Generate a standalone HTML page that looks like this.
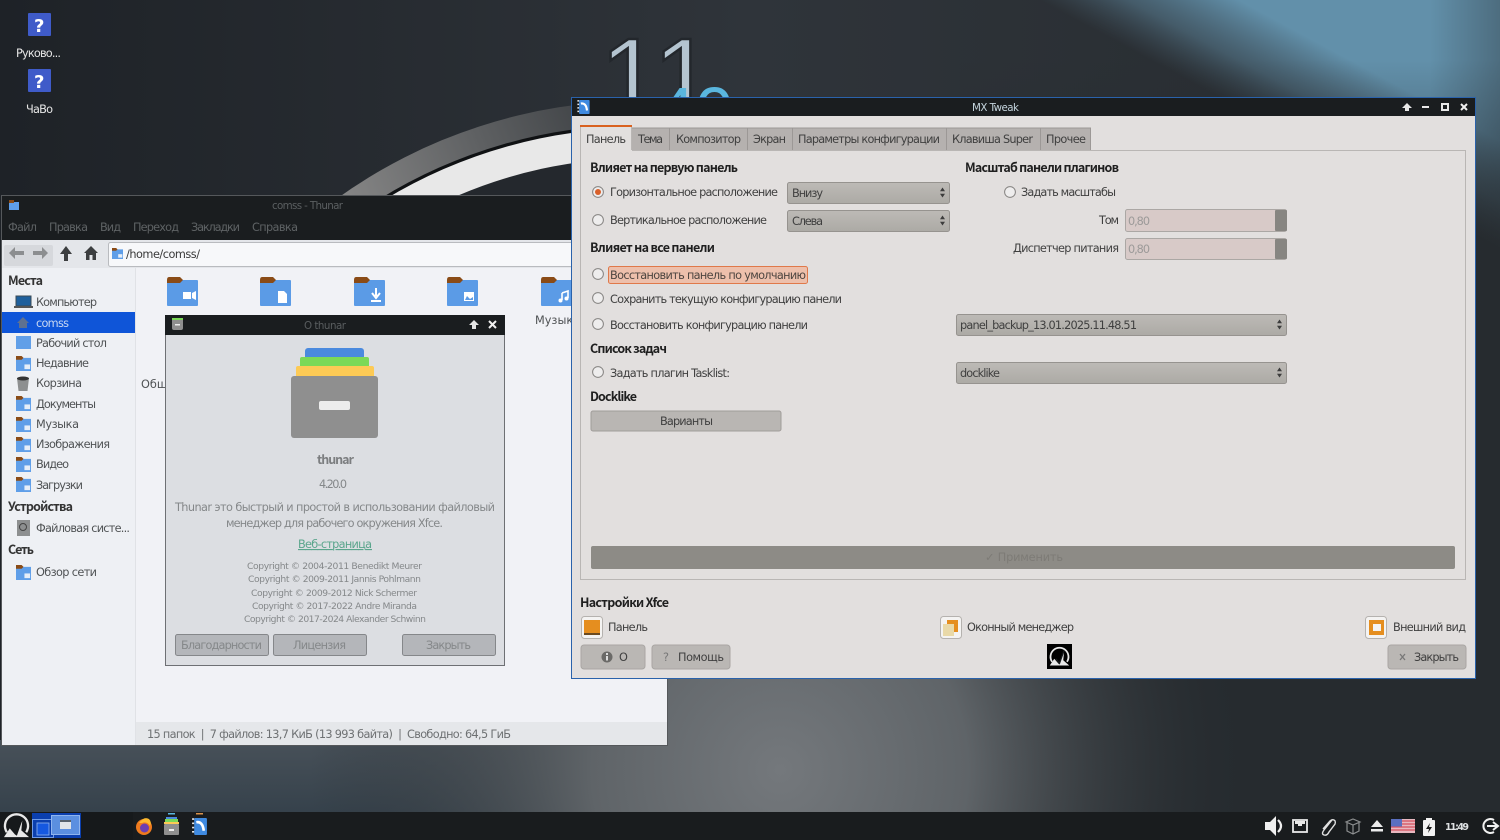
<!DOCTYPE html>
<html lang="ru"><head><meta charset="utf-8"><title>MX Tweak</title>
<style>
html,body{margin:0;padding:0;background:#1f2328;width:1500px;height:840px;overflow:hidden}
svg{display:block;overflow:hidden;filter:blur(.35px)}
text{font-family:"DejaVu Sans","Noto Sans CJK JP",sans-serif;font-size:11.3px;fill:#3f3f3f;white-space:pre}
.b{font-family:"Noto Sans CJK JP","DejaVu Sans",sans-serif;font-size:12.5px;font-weight:700;fill:#1f1f1f}
.s{fill:#4f5254}
.d{fill:#85888a}
.c{font-size:9.2px;fill:#85888a}
.t{font-size:10.3px}
</style></head><body>
<svg xmlns="http://www.w3.org/2000/svg" width="1500" height="840" viewBox="0 0 1500 840">
<defs>
<linearGradient id="bl" gradientUnits="userSpaceOnUse" x1="1095" y1="30" x2="1185" y2="-137"><stop offset="0" stop-color="#4a6272" stop-opacity="0"/><stop offset=".22" stop-color="#56788c" stop-opacity=".6"/><stop offset=".5" stop-color="#6290aa"/><stop offset="1" stop-color="#6290aa"/></linearGradient>
<linearGradient id="dk" x1="0" y1="0" x2="0" y2="1"><stop offset="0" stop-color="#262b2f" stop-opacity="0"/><stop offset=".25" stop-color="#262b2f" stop-opacity=".45"/><stop offset=".8" stop-color="#262b2f"/></linearGradient>
<linearGradient id="rt" x1="0" y1="0" x2="1" y2="0"><stop offset="0" stop-color="#262b2f" stop-opacity="0"/><stop offset="1" stop-color="#262b2f" stop-opacity=".35"/></linearGradient>
<radialGradient id="gr" gradientUnits="userSpaceOnUse" cx="780" cy="770" r="470"><stop offset="0" stop-color="#74787c"/><stop offset=".4" stop-color="#5f6468"/><stop offset="1" stop-color="#282d31" stop-opacity="0"/></radialGradient>
<linearGradient id="bot" x1="0" y1="0" x2="0" y2="1"><stop offset="0" stop-color="#485159"/><stop offset="1" stop-color="#35414b"/></linearGradient>
<linearGradient id="bg" x1="0" y1="0" x2="1" y2="0"><stop offset="0" stop-color="#1e2227"/><stop offset=".5" stop-color="#2f343a"/><stop offset="1" stop-color="#262b2f"/></linearGradient>
<linearGradient id="ring" gradientUnits="userSpaceOnUse" x1="345" y1="195" x2="570" y2="105"><stop offset="0" stop-color="#858585"/><stop offset=".6" stop-color="#5e6062"/><stop offset="1" stop-color="#45484b"/></linearGradient>
<linearGradient id="cb" x1="0" y1="0" x2="0" y2="1"><stop offset="0" stop-color="#bdbab6"/><stop offset="1" stop-color="#acaaa5"/></linearGradient>
<symbol id="fb" viewBox="0 0 31 29"><rect y="3" width="31" height="26" rx="1" fill="#5b9be6"/><path d="M0 3Q0 0 2 0H13L16 3 13 6H0Z" fill="#8a4b16"/></symbol>
<symbol id="fs" viewBox="0 0 16 16"><rect y="2" width="16" height="14" fill="#5f9ee8"/><path d="M0 2V0H6L8 2 6 4H0Z" fill="#8a4b16"/><rect x="9" y="9" width="6" height="5" fill="#e6eef8"/></symbol>
<symbol id="mx" viewBox="0 0 28 28"><path d="M4 21A12 12 0 1 1 24 21" fill="none" stroke="#e8e8e8" stroke-width="2.400"/><path d="M1 26 7 17 13 24 20 9 19 19 27 26Z" fill="#e8e8e8"/><path d="M9 17 14 23 20 6" fill="none" stroke="#15181a" stroke-width="1.800"/></symbol>
<symbol id="tw" viewBox="0 0 14 16"><rect x="2" y="0" width="12" height="16" rx="1" fill="#3f8ae0"/><path d="M4 4Q10 3 11 12" fill="none" stroke="#fff" stroke-width="2.500"/><path d="M0 1H2M0 5H2M0 9H2M0 13H2" stroke="#e8e8e8" stroke-width="1.600"/></symbol>
<symbol id="th" viewBox="0 0 87 90"><rect x="14" width="59" height="16" rx="3" fill="#4a8ade"/><rect x="9" y="9" width="69" height="16" rx="2" fill="#7bd957"/><rect x="5" y="18" width="78" height="16" rx="2" fill="#fdca55"/><rect y="28" width="87" height="62" rx="3" fill="#8f8f8f"/><rect x="28" y="53" width="31" height="9" rx="2" fill="#ececec"/></symbol>
<symbol id="rd" viewBox="0 0 12 12"><circle cx="6" cy="6" r="5.400" fill="#eeeded" stroke="#858381" stroke-width="1"/></symbol>
<symbol id="sp" viewBox="0 0 6 12"><path d="M3 0 6 4.500H0ZM3 12 0 7.500H6Z" fill="#3c3c3c"/></symbol>
</defs>

<!-- wallpaper -->
<rect width="1500" height="840" fill="url(#bg)"/>
<rect x="0" y="740" width="700" height="75" fill="url(#bot)"/>
<rect x="960" width="540" height="600" fill="url(#bl)"/>
<rect x="960" y="60" width="540" height="500" fill="url(#dk)"/>
<rect x="1430" y="0" width="70" height="300" fill="url(#rt)"/>
<rect x="960" y="560" width="540" height="260" fill="#262b2f"/>
<rect x="300" y="300" width="1000" height="515" fill="url(#gr)"/>
<path d="M335 200A519 519 0 0 1 945 200Z" fill="url(#ring)"/>
<path d="M378 200A495 495 0 0 1 902 200Z" fill="#101214"/>
<path d="M384 200A492 492 0 0 1 896 200Z" fill="#e8e8e8"/>
<path d="M448 200A462 462 0 0 1 832 200Z" fill="#24282d"/>
<text x="600" y="115" stroke="#23272c" stroke-width="2.500" style="font-family:'Liberation Sans',sans-serif;font-size:110px;fill:#b4c4d0">11</text>
<text x="656" y="136" style="font-family:'Liberation Sans',sans-serif;font-size:70px;fill:#5ab6de">40</text>

<!-- desktop icons -->
<rect x="28" y="13" width="23" height="23" rx="1" fill="#3f5bc9"/><text x="34" y="32" style="font-size:18px;font-weight:700;fill:#fff">?</text>
<rect x="28" y="69" width="23" height="23" rx="1" fill="#3f5bc9"/><text x="34" y="88" style="font-size:18px;font-weight:700;fill:#fff">?</text>
<text x="16" y="57" textLength="45" style="fill:#e6e6e6">Руково...</text>
<text x="26" y="113" textLength="27" style="fill:#e6e6e6">ЧаВо</text>

<!-- Thunar window -->
<rect x="1.500" y="195.500" width="666" height="550" fill="#f1f2f6" stroke="#55585b"/>
<rect x="2" y="196" width="665" height="44" fill="#1a1d1f"/>
<g transform="translate(9 200)"><rect y="2" width="10" height="8" fill="#5f9ee8"/><rect width="5" height="3" fill="#8a4b16"/></g>
<text x="272" y="209" textLength="71" class="t" style="fill:#5b5f61">comss - Thunar</text>
<text x="8" y="231" textLength="29" style="fill:#5e6264">Файл</text>
<text x="49" y="231" textLength="39" style="fill:#5e6264">Правка</text>
<text x="100" y="231" textLength="21" style="fill:#5e6264">Вид</text>
<text x="133" y="231" textLength="46" style="fill:#5e6264">Переход</text>
<text x="191" y="231" textLength="49" style="fill:#5e6264">Закладки</text>
<text x="252" y="231" textLength="46" style="fill:#5e6264">Справка</text>
<rect x="2" y="240" width="665" height="28" fill="#e4e6ea"/>
<rect x="4" y="245" width="49" height="21" rx="2" fill="#d6d8dc"/>
<path d="M9 253 15 247V251H24V255H15V259Z" fill="#8c8e90"/>
<path d="M48 253 42 247V251H33V255H42V259Z" fill="#8c8e90"/>
<path d="M66 246 72 254H68V261H64V254H60Z" fill="#3c3e40"/>
<path d="M91 246 98 253H96V260H92.500V255H89.500V260H86V253H84Z" fill="#3c3e40"/>
<rect x="108.500" y="242.500" width="480" height="24" rx="2" fill="#f7f8fa" stroke="#b9bbbf"/>
<use href="#fs" x="112" y="248" width="11" height="11"/>
<text x="126" y="258" textLength="74" style="fill:#3a3a3a">/home/comss/</text>

<!-- sidebar -->
<rect x="2" y="268" width="134" height="477" fill="#eef0f4"/>
<rect x="135" y="268" width="1" height="477" fill="#e0e2e6"/>
<text x="8" y="285" textLength="35" class="b" style="fill:#333">Места</text>
<rect x="16" y="296" width="15" height="10" fill="#1e5f9c" stroke="#3a4a55"/><rect x="14" y="306" width="19" height="2" fill="#555"/>
<text x="36" y="306" textLength="61" class="s">Компьютер</text>
<rect x="2" y="312" width="133" height="21" fill="#0f55d8"/>
<path d="M23 317 29 323H27V328H19V323H17Z" fill="#5f7190"/>
<text x="36" y="327" textLength="33" style="fill:#c9d8f2">comss</text>
<rect x="16" y="336" width="15" height="13" fill="#619fe8"/>
<text x="36" y="347" textLength="71" class="s">Рабочий стол</text>
<use href="#fs" x="16" y="356" width="15" height="15"/>
<text x="36" y="367" textLength="53" class="s">Недавние</text>
<path d="M17 378H29L27.500 391H18.500Z" fill="#8d8f90"/><ellipse cx="23" cy="378.500" rx="6" ry="2" fill="#333"/>
<text x="36" y="387" textLength="46" class="s">Корзина</text>
<use href="#fs" x="16" y="396" width="15" height="15"/>
<text x="36" y="408" textLength="60" class="s">Документы</text>
<use href="#fs" x="16" y="417" width="15" height="15"/>
<text x="36" y="428" textLength="43" class="s">Музыка</text>
<use href="#fs" x="16" y="437" width="15" height="15"/>
<text x="36" y="448" textLength="74" class="s">Изображения</text>
<use href="#fs" x="16" y="457" width="15" height="15"/>
<text x="36" y="468" textLength="33" class="s">Видео</text>
<use href="#fs" x="16" y="477" width="15" height="15"/>
<text x="36" y="489" textLength="47" class="s">Загрузки</text>
<text x="8" y="511" textLength="65" class="b" style="fill:#333">Устройства</text>
<rect x="17" y="520" width="13" height="16" fill="#8d8f90"/><circle cx="23" cy="527" r="3.500" fill="none" stroke="#444"/>
<text x="36" y="532" textLength="94" class="s">Файловая систе...</text>
<text x="8" y="554" textLength="26" class="b" style="fill:#333">Сеть</text>
<use href="#fs" x="16" y="565" width="15" height="15"/>
<text x="36" y="576" textLength="61" class="s">Обзор сети</text>

<!-- folders -->
<use href="#fb" x="167" y="277" width="31" height="29"/><path d="M183 292H191V299H183ZM192 293 196 291V300L192 298Z" fill="#fff"/>
<use href="#fb" x="260" y="277" width="31" height="29"/><path d="M278 291H284L287 294V303H278Z" fill="#fff"/>
<use href="#fb" x="354" y="277" width="31" height="29"/><path d="M376 288V296M372 293 376 298 380 293M371 301H381" stroke="#fff" stroke-width="2" fill="none"/>
<use href="#fb" x="447" y="277" width="31" height="29"/><rect x="464" y="292" width="10" height="9" fill="#fff"/><path d="M465 300 467 296 470 299 473 297V300Z" fill="#5b9be6"/>
<use href="#fb" x="541" y="277" width="31" height="29"/><path d="M562 293V300M562 293 568 291V298" stroke="#fff" stroke-width="1.600" fill="none"/><circle cx="560.500" cy="300.500" r="2" fill="#fff"/><circle cx="566.500" cy="298.500" r="2" fill="#fff"/>
<text x="535" y="324" class="s">Музыка</text>
<text x="141" y="388" class="s">Общедоступные</text>

<!-- status -->
<rect x="136" y="722" width="531" height="23" fill="#e5e7ea"/>
<text x="147" y="738" textLength="364" style="fill:#6e7173">15 папок  |  7 файлов: 13,7 КиБ (13 993 байта)  |  Свободно: 64,5 ГиБ</text>

<!-- About dialog -->
<rect x="165.500" y="315.500" width="339" height="350" fill="#dcdee2" stroke="#6e7074"/>
<rect x="165" y="315" width="340" height="20" fill="#1a1d1f"/>
<rect x="172" y="318" width="11" height="12" rx="2" fill="#8f8f8f"/><rect x="172" y="318" width="11" height="2" fill="#7bd957"/><rect x="175" y="324" width="5" height="1.500" fill="#eee"/>
<text x="304" y="329" textLength="42" class="t" style="fill:#595d5f">O thunar</text>
<path d="M474 320 479 325H476V329H472V325H469Z" fill="#e4e4e4"/>
<path d="M489 321 496 328M496 321 489 328" stroke="#f0f0f0" stroke-width="2"/>
<use href="#th" x="291" y="348" width="87" height="90"/>
<text x="317" y="464" textLength="37" class="b" style="fill:#7c7e80">thunar</text>
<text x="319" y="488" textLength="28" class="d">4.20.0</text>
<text x="175" y="511" textLength="320" class="d">Thunar это быстрый и простой в использовании файловый</text>
<text x="226" y="527" textLength="217" class="d">менеджер для рабочего окружения Xfce.</text>
<text x="298" y="548" textLength="74" style="fill:#5aa58c;text-decoration:underline">Веб-страница</text>
<text x="247" y="569" textLength="175" class="c">Copyright © 2004-2011 Benedikt Meurer</text>
<text x="248" y="582" textLength="173" class="c">Copyright © 2009-2011 Jannis Pohlmann</text>
<text x="251" y="596" textLength="166" class="c">Copyright © 2009-2012 Nick Schermer</text>
<text x="252" y="609" textLength="165" class="c">Copyright © 2017-2022 Andre Miranda</text>
<text x="244" y="622" textLength="182" class="c">Copyright © 2017-2024 Alexander Schwinn</text>
<rect x="175.500" y="634.500" width="93" height="21" rx="2" fill="#b4b6ba" stroke="#85878a"/>
<rect x="273.500" y="634.500" width="93" height="21" rx="2" fill="#b4b6ba" stroke="#85878a"/>
<rect x="402.500" y="634.500" width="93" height="21" rx="2" fill="#b4b6ba" stroke="#85878a"/>
<text x="181" y="649" textLength="81" class="d">Благодарности</text>
<text x="293" y="649" textLength="53" class="d">Лицензия</text>
<text x="426" y="649" textLength="45" class="d">Закрыть</text>

<!-- MX Tweak -->
<rect x="571.500" y="97.500" width="904" height="581" fill="#e2dfde" stroke="#2a62ab"/>
<rect x="572" y="98" width="903" height="18" fill="#1a1d1f"/>
<use href="#tw" x="577" y="100" width="13" height="14"/>
<text x="972" y="111" textLength="47" class="t" style="fill:#c3d3dc">MX Tweak</text>
<path d="M1407 103 1412 108H1409V111H1405V108H1402Z" fill="#e8e8e8"/>
<rect x="1422" y="106" width="7" height="2" fill="#e8e8e8"/>
<rect x="1442" y="104" width="6" height="6" fill="none" stroke="#e8e8e8" stroke-width="2"/>
<path d="M1461 104 1467 110M1467 104 1461 110" stroke="#f0f0f0" stroke-width="2"/>

<rect x="580.500" y="150.500" width="885" height="429" fill="#e2dfde" stroke="#b9b6b4"/>
<rect x="632" y="128" width="459" height="22" fill="#b5b1af"/>
<path d="M669.500 128V150M747.500 128V150M792.500 128V150M946.500 128V150M1040.500 128V150M1090.500 128V150M632 128H1091" stroke="#9c9896" fill="none"/>
<rect x="580" y="125" width="52" height="26" fill="#e2dfde"/><rect x="580" y="125" width="52" height="2" fill="#d9611f"/>
<path d="M580.500 127V151M631.500 127V150" stroke="#b9b6b4" fill="none"/>
<text x="586" y="143" textLength="40">Панель</text>
<text x="638" y="143" textLength="25">Тема</text>
<text x="676" y="143" textLength="65">Композитор</text>
<text x="753" y="143" textLength="33">Экран</text>
<text x="798" y="143" textLength="142">Параметры конфигурации</text>
<text x="952" y="143" textLength="81">Клавиша Super</text>
<text x="1046" y="143" textLength="40">Прочее</text>

<text x="590" y="172" textLength="148" class="b">Влияет на первую панель</text>
<text x="965" y="172" textLength="154" class="b">Масштаб панели плагинов</text>
<use href="#rd" x="592" y="186" width="12" height="12"/><circle cx="598" cy="192" r="3" fill="#d9602a"/>
<text x="610" y="196" textLength="168">Горизонтальное расположение</text>
<rect x="787.500" y="182.500" width="162" height="21" rx="2" fill="url(#cb)" stroke="#96938f"/>
<text x="792" y="197" textLength="31">Внизу</text><use href="#sp" x="940" y="187" width="5" height="11"/>
<use href="#rd" x="592" y="214" width="12" height="12"/>
<text x="610" y="224" textLength="157">Вертикальное расположение</text>
<rect x="787.500" y="210.500" width="162" height="21" rx="2" fill="url(#cb)" stroke="#96938f"/>
<text x="792" y="225" textLength="31">Слева</text><use href="#sp" x="940" y="215" width="5" height="11"/>

<use href="#rd" x="1004" y="186" width="12" height="12"/>
<text x="1021" y="196" textLength="95">Задать масштабы</text>
<text x="1099" y="224" textLength="20">Том</text>
<rect x="1125.500" y="209.500" width="161" height="22" rx="2" fill="#d8cac8" stroke="#aba7a4"/>
<rect x="1275" y="210" width="12" height="21" rx="1" fill="#878581"/>
<text x="1128" y="225" textLength="22" style="fill:#9c9a99">0,80</text>
<text x="1013" y="252" textLength="106">Диспетчер питания</text>
<rect x="1125.500" y="238.500" width="161" height="21" rx="2" fill="#d8cac8" stroke="#aba7a4"/>
<rect x="1275" y="239" width="12" height="20" rx="1" fill="#878581"/>
<text x="1128" y="253" textLength="22" style="fill:#9c9a99">0,80</text>

<text x="590" y="252" textLength="125" class="b">Влияет на все панели</text>
<use href="#rd" x="592" y="268" width="12" height="12"/>
<rect x="608.500" y="266.500" width="199" height="17" rx="2" fill="#edc0ac" stroke="#e0794a"/>
<text x="610" y="279" textLength="196" style="fill:#4d4540">Восстановить панель по умолчанию</text>
<use href="#rd" x="592" y="292" width="12" height="12"/>
<text x="610" y="303" textLength="232">Сохранить текущую конфигурацию панели</text>
<use href="#rd" x="592" y="318" width="12" height="12"/>
<text x="610" y="329" textLength="198">Восстановить конфигурацию панели</text>
<rect x="956.500" y="314.500" width="330" height="21" rx="2" fill="url(#cb)" stroke="#96938f"/>
<text x="960" y="329" textLength="177">panel_backup_13.01.2025.11.48.51</text><use href="#sp" x="1277" y="319" width="5" height="11"/>
<text x="590" y="353" textLength="77" class="b">Список задач</text>
<use href="#rd" x="592" y="366" width="12" height="12"/>
<text x="610" y="377" textLength="120">Задать плагин Tasklist:</text>
<rect x="956.500" y="362.500" width="330" height="21" rx="2" fill="url(#cb)" stroke="#96938f"/>
<text x="960" y="377" textLength="40">docklike</text><use href="#sp" x="1277" y="367" width="5" height="11"/>
<text x="590" y="401" textLength="47" class="b">Docklike</text>
<rect x="591" y="411" width="190" height="20" rx="2" fill="#b9b6b3" stroke="#a09d9a"/>
<text x="660" y="425" textLength="53">Варианты</text>
<rect x="591" y="546" width="864" height="23" rx="2" fill="#8d8b86"/>
<text x="985" y="561" textLength="78" style="fill:#7d7b76">✓ Применить</text>

<text x="580" y="607" textLength="89" class="b">Настройки Xfce</text>
<rect x="581.500" y="616.500" width="21" height="22" rx="3" fill="#f4f3f2" stroke="#b5b2af"/><rect x="584" y="620" width="16" height="15" fill="#e58e1f"/><rect x="584" y="633" width="16" height="2" fill="#6b4a20"/>
<text x="608" y="631" textLength="40">Панель</text>
<rect x="940.500" y="616.500" width="21" height="22" rx="3" fill="#f4f3f2" stroke="#b5b2af"/><rect x="947" y="620" width="11" height="12" fill="#e58e1f"/><rect x="943" y="624" width="11" height="12" fill="#e9d9a8"/>
<text x="967" y="631" textLength="107">Оконный менеджер</text>
<rect x="1365.500" y="616.500" width="21" height="22" rx="3" fill="#f4f3f2" stroke="#b5b2af"/><rect x="1369" y="620" width="15" height="15" fill="#e58e1f"/><rect x="1373" y="624" width="8" height="7" fill="#f4f3f2"/>
<text x="1393" y="631" textLength="73">Внешний вид</text>

<rect x="581" y="645" width="64" height="24" rx="3" fill="#bab7b4" stroke="#a9a6a3"/>
<circle cx="607" cy="657" r="5.500" fill="#6b6a68"/><rect x="606" y="656" width="2" height="4.500" fill="#ddd"/><rect x="606" y="653" width="2" height="2" fill="#ddd"/>
<text x="619" y="661" textLength="9">О</text>
<rect x="652" y="645" width="78" height="24" rx="3" fill="#bab7b4" stroke="#a9a6a3"/>
<text x="663" y="661" style="fill:#777">?</text>
<text x="678" y="661" textLength="46">Помощь</text>
<rect x="1388" y="645" width="78" height="24" rx="3" fill="#bab7b4" stroke="#a9a6a3"/>
<path d="M1400 654 1405 660M1405 654 1400 660" stroke="#777" stroke-width="1.300"/>
<text x="1414" y="661" textLength="45">Закрыть</text>
<rect x="1047" y="644" width="25" height="25" fill="#000"/>
<use href="#mx" x="1049" y="646" width="21" height="21"/>

<!-- taskbar -->
<rect y="812" width="1500" height="28" fill="#16191b"/>
<rect x="133" y="812" width="1367" height="28" fill="#191c1e"/>
<use href="#mx" x="3" y="812" width="27" height="27"/>
<rect x="32" y="813" width="49" height="25" fill="#0b3fae"/>
<rect x="32.500" y="819.500" width="21" height="18" fill="#0b3fae" stroke="#6f9be8"/>
<rect x="37" y="823" width="12" height="12" fill="#1558e0" stroke="#8fb4ee" stroke-width=".8"/>
<rect x="51.500" y="815.500" width="28" height="19" fill="#5b8fe0" stroke="#8fb4ee"/>
<rect x="60" y="820" width="11" height="9" fill="#dfe3e8"/><rect x="60" y="820" width="11" height="2" fill="#55606c"/>
<circle cx="144" cy="827" r="8" fill="#ee7a1e"/><circle cx="144.500" cy="828" r="4.500" fill="#6b3fb0"/><path d="M139 823Q144 816 149 819 152 822 150 826 147 821 142 823Z" fill="#fcb92e"/>
<rect x="164" y="824" width="15" height="11" rx="1" fill="#8f8f8f"/><rect x="166" y="817" width="11" height="3" fill="#4a8ade"/><rect x="165" y="819" width="13" height="3" fill="#7bd957"/><rect x="164" y="822" width="15" height="2" fill="#fdca55"/><rect x="169" y="829" width="5" height="2" fill="#eee"/>
<rect x="168" y="813" width="7" height="1.500" fill="#5ab6de"/>
<use href="#tw" x="192" y="818" width="15" height="17"/>
<rect x="196" y="813" width="7" height="1.500" fill="#d9924a"/>

<path d="M1265 822H1270L1276 816V836L1270 830H1265Z" fill="#f0f0f0"/><path d="M1278 820Q1284 826 1278 832" fill="none" stroke="#f0f0f0" stroke-width="2.200"/>
<rect x="1293" y="820" width="14" height="12" fill="none" stroke="#e8e8e8" stroke-width="1.800"/><path d="M1295 821V824H1298V826H1302V824H1305V821Z" fill="#e8e8e8"/>
<path d="M1332 820 1324 830Q1321 834 1324 835T1329 832L1335 824Q1336 821 1334 820T1330 821L1323 829" fill="none" stroke="#e0e0e0" stroke-width="1.400"/>
<path d="M1346 822 1353 825 1360 822 1353 819ZM1347 823V831L1353 834 1359 831V823M1353 825V834" fill="none" stroke="#8d8f90" stroke-width="1.200"/>
<path d="M1377 820 1383 827H1371ZM1371 829H1383V831.500H1371Z" fill="#ececec"/>
<rect x="1391" y="819" width="24" height="14" fill="#e8b8c0"/>
<path d="M1391 821H1415M1391 824H1415M1391 827H1415M1391 830H1415" stroke="#d5505e" stroke-width="1.200"/>
<rect x="1391" y="819" width="11" height="7.500" fill="#5a6fc0"/>
<rect x="1423" y="820" width="12" height="16" rx="1" fill="#f2f2f2"/><rect x="1426" y="818" width="6" height="2" fill="#f2f2f2"/><path d="M1430 823 1426 829H1429L1428 833 1432 827H1429Z" fill="#1a1a1a"/>
<text x="1445" y="830" textLength="24" style="font-size:9.500px;font-weight:700;fill:#dfe2e4">11:49</text>
<path d="M1494 820A7 7 0 1 0 1494 832" fill="none" stroke="#f0f0f0" stroke-width="2"/><path d="M1487 826H1497M1493 822 1498 826 1493 830" fill="none" stroke="#f0f0f0" stroke-width="2"/>
</svg>
</body></html>
